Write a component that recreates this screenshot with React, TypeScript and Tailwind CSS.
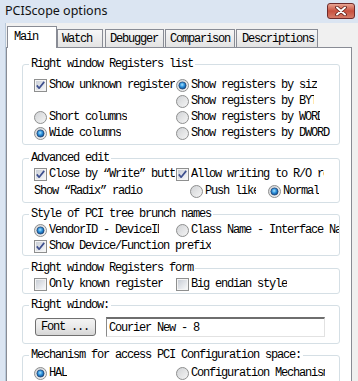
import React from "react";

const Check = ({ checked }: { checked?: boolean }) => (
  <svg width="13" height="13" viewBox="0 0 13 13" className="shrink-0 block">
    <defs>
      <linearGradient id="cbg" x1="0" y1="0" x2="1" y2="1">
        <stop offset="0" stopColor="#c9ced6" />
        <stop offset="1" stopColor="#f7f8f9" />
      </linearGradient>
    </defs>
    <rect x="0.5" y="0.5" width="12" height="12" fill="#f4f4f4" stroke="#8e8f8f" />
    <rect x="2" y="2" width="9" height="9" fill="url(#cbg)" />
    {checked && (
      <path d="M2.8 6.4 L5.1 9.2 L10.2 2.9" stroke="#3d4f8e" strokeWidth="1.7" fill="none" strokeLinejoin="round" />
    )}
  </svg>
);

const Radio = ({ checked }: { checked?: boolean }) => (
  <svg width="13" height="13" viewBox="0 0 13 13" className="shrink-0 block">
    <defs>
      <linearGradient id="rbg" x1="0" y1="0" x2="1" y2="1">
        <stop offset="0" stopColor="#cfd1d4" />
        <stop offset="1" stopColor="#f6f6f6" />
      </linearGradient>
      <radialGradient id="rsel" cx="0.45" cy="0.4" r="0.6">
        <stop offset="0" stopColor="#a8e2ff" />
        <stop offset="0.5" stopColor="#2f93dc" />
        <stop offset="1" stopColor="#0b4a8e" />
      </radialGradient>
    </defs>
    <circle cx="6.5" cy="6.5" r="6" fill="url(#rbg)" stroke="#8e8f8f" />
    {checked && <circle cx="6.5" cy="6.5" r="3.6" fill="url(#rsel)" stroke="#1d3f6e" strokeWidth="0.7" />}
  </svg>
);

const Lbl = ({ children, w, ml = "ml-[2px]" }: { children: React.ReactNode; w?: string; ml?: string }) => (
  <span className={`${ml} ${w ?? ""} overflow-hidden whitespace-nowrap leading-[13px]`}>{children}</span>
);

export default function App() {
  return (
    <div className="w-[358px] h-[381px] overflow-hidden bg-[#dbe5f2] text-black">
      {/* title bar */}
      <div className="h-[23px] flex items-start justify-between">
        <span className="ml-[5px] mt-[3px] text-[12.5px] leading-[15px] font-['Noto_Sans',sans-serif] text-[#111]">
          PCIScope options
        </span>
        <div className="mt-[3px] mr-[3px] w-[28px] h-[16px] rounded-[3px] border border-[#6e2b2b] bg-linear-to-b from-[#e8a493] via-[#c7503e] to-[#d57b68] flex items-center justify-center">
          <svg width="12" height="10" viewBox="0 0 12 10">
            <path d="M2 1.5 L10 8.5 M10 1.5 L2 8.5" stroke="#5a1a14" strokeWidth="3.6" strokeLinecap="round" />
            <path d="M2 1.5 L10 8.5 M10 1.5 L2 8.5" stroke="#ffffff" strokeWidth="2" strokeLinecap="round" />
          </svg>
        </div>
      </div>

      <div className="flex h-[358px]">
        <div className="w-[6px] bg-[#dbe5f2] border-r border-[#b9c9da]" />
        <div className="flex-1 bg-[#f0f0f0] pt-[3px] font-['Liberation_Mono',monospace] text-[12px] tracking-[-1.2px]">
          {/* tabs */}
          <div className="flex items-end h-[21px]">
            <div className="ml-[1px] w-[50px] h-[22px] -mb-[1px] relative z-10 bg-white border-l border-t border-r border-[#898c95] pl-[6px] pt-[4px] leading-[12px]">
              Main
            </div>
            <div className="ml-[0px] w-[46px] h-[18px] bg-linear-to-b from-[#f7f7f7] to-[#e3e3e3] border-l border-t border-r border-[#898c95] pl-[4px] pt-[3px] leading-[12px]">
              Watch
            </div>
            <div className="ml-[2px] w-[59px] h-[18px] bg-linear-to-b from-[#f7f7f7] to-[#e3e3e3] border-l border-t border-r border-[#898c95] pl-[4px] pt-[3px] leading-[12px]">
              Debugger
            </div>
            <div className="ml-[1px] w-[70px] h-[18px] bg-linear-to-b from-[#f7f7f7] to-[#e3e3e3] border-l border-t border-r border-[#898c95] pl-[4px] pt-[3px] leading-[12px]">
              Comparison
            </div>
            <div className="ml-[1px] w-[82px] h-[18px] bg-linear-to-b from-[#f7f7f7] to-[#e3e3e3] border-l border-t border-r border-[#898c95] pl-[5px] pt-[3px] leading-[12px]">
              Descriptions
            </div>
          </div>

          {/* panel */}
          <div className="w-[346px] h-[360px] bg-white border border-[#898c95] pl-[15px] pt-[10px]">
            {/* G1 */}
            <fieldset className="w-[318px] border border-[#d5dfe5] rounded-[3px] pl-[6px] pt-[7px] pb-[3px]">
              <legend className="px-[2px] leading-[12px]">Right window Registers list</legend>
              <div className="pl-[5px] grid grid-cols-[142px_1fr]">
                <div className="flex items-center h-[16px]"><Check checked /><Lbl w="w-[126px]">Show unknown register</Lbl></div>
                <div className="flex items-center h-[16px]"><Radio checked /><Lbl w="w-[126px]">Show registers by size</Lbl></div>
                <div className="h-[16px]" />
                <div className="flex items-center h-[16px]"><Radio /><Lbl w="w-[123px]">Show registers by BYTE</Lbl></div>
                <div className="flex items-center h-[16px]"><Radio /><Lbl>Short columns</Lbl></div>
                <div className="flex items-center h-[16px]"><Radio /><Lbl w="w-[129px]">Show registers by WORD</Lbl></div>
                <div className="flex items-center h-[16px]"><Radio checked /><Lbl>Wide columns</Lbl></div>
                <div className="flex items-center h-[16px]"><Radio /><Lbl w="w-[140px]">Show registers by DWORD</Lbl></div>
              </div>
            </fieldset>

            {/* G2 */}
            <fieldset className="mt-[7px] w-[318px] border border-[#d5dfe5] rounded-[3px] pl-[6px] pt-[2px] pb-[2px]">
              <legend className="px-[2px] leading-[12px]">Advanced edit</legend>
              <div className="pl-[5px]">
                <div className="grid grid-cols-[142px_1fr]">
                  <div className="flex items-center h-[17px]"><Check checked /><Lbl w="w-[126px]">Close by “Write” button</Lbl></div>
                  <div className="flex items-center h-[17px]"><Check checked /><Lbl w="w-[133px]">Allow writing to R/O registers</Lbl></div>
                </div>
                <div className="flex items-center h-[17px]">
                  <span className="w-[156px] whitespace-nowrap leading-[13px]">Show “Radix” radio</span>
                  <Radio />
                  <Lbl w="w-[51px]">Push like</Lbl>
                  <span className="ml-[12px]"><Radio checked /></span>
                  <Lbl>Normal</Lbl>
                </div>
              </div>
            </fieldset>

            {/* G3 */}
            <fieldset className="mt-[5px] w-[318px] border border-[#d5dfe5] rounded-[3px] pl-[6px] pt-[2px] pb-[1px]">
              <legend className="px-[2px] leading-[12px]">Style of PCI tree brunch names</legend>
              <div className="pl-[5px]">
                <div className="grid grid-cols-[142px_1fr]">
                  <div className="flex items-center h-[16px]"><Radio checked /><Lbl w="w-[110px]">VendorID - DeviceID</Lbl></div>
                  <div className="flex items-center h-[16px]"><Radio /><Lbl w="w-[148px]">Class Name - Interface Name</Lbl></div>
                </div>
                <div className="flex items-center h-[16px]"><Check checked /><Lbl>Show Device/Function prefix</Lbl></div>
              </div>
            </fieldset>

            {/* G4 */}
            <fieldset className="mt-[6px] w-[318px] border border-[#d5dfe5] rounded-[3px] pl-[6px] pt-[2px] pb-[1px]">
              <legend className="px-[2px] leading-[12px]">Right window Registers form</legend>
              <div className="pl-[5px] grid grid-cols-[142px_1fr]">
                <div className="flex items-center h-[16px]"><Check /><Lbl>Only known register</Lbl></div>
                <div className="flex items-center h-[16px]"><Check /><Lbl>Big endian style</Lbl></div>
              </div>
            </fieldset>

            {/* G5 */}
            <fieldset className="mt-[5px] w-[318px] border border-[#d5dfe5] rounded-[3px] pl-[6px] pt-[6px] pb-[6px]">
              <legend className="px-[2px] leading-[12px]">Right window:</legend>
              <div className="pl-[5px] flex items-center h-[20px]">
                <div className="ml-[1px] w-[61px] h-[18px] rounded-[3px] border border-[#707070] bg-linear-to-b from-[#f4f4f4] via-[#e9e9e9] to-[#d6d6d6] pl-[5px] flex items-center leading-[12px] whitespace-nowrap">
                  Font ...
                </div>
                <div className="ml-[10px] w-[219px] h-[20px] border-t-2 border-l border-r border-b border-t-[#6e6e6e] border-l-[#8a8a8a] border-r-[#e2e2e2] border-b-[#e2e2e2] pl-[2px] flex items-center leading-[12px] whitespace-nowrap">
                  Courier New - 8
                </div>
              </div>
            </fieldset>

            {/* G6 */}
            <fieldset className="mt-[5px] w-[318px] border border-[#d5dfe5] rounded-[3px] pl-[6px] pt-[4px] pb-[4px]">
              <legend className="px-[2px] leading-[12px]">Mechanism for access PCI Configuration space:</legend>
              <div className="pl-[5px] grid grid-cols-[142px_1fr]">
                <div className="flex items-center h-[16px]"><Radio checked /><Lbl>HAL</Lbl></div>
                <div className="flex items-center h-[16px]"><Radio /><Lbl w="w-[134px]">Configuration Mechanism #1</Lbl></div>
              </div>
            </fieldset>
          </div>
        </div>
      </div>
    </div>
  );
}
